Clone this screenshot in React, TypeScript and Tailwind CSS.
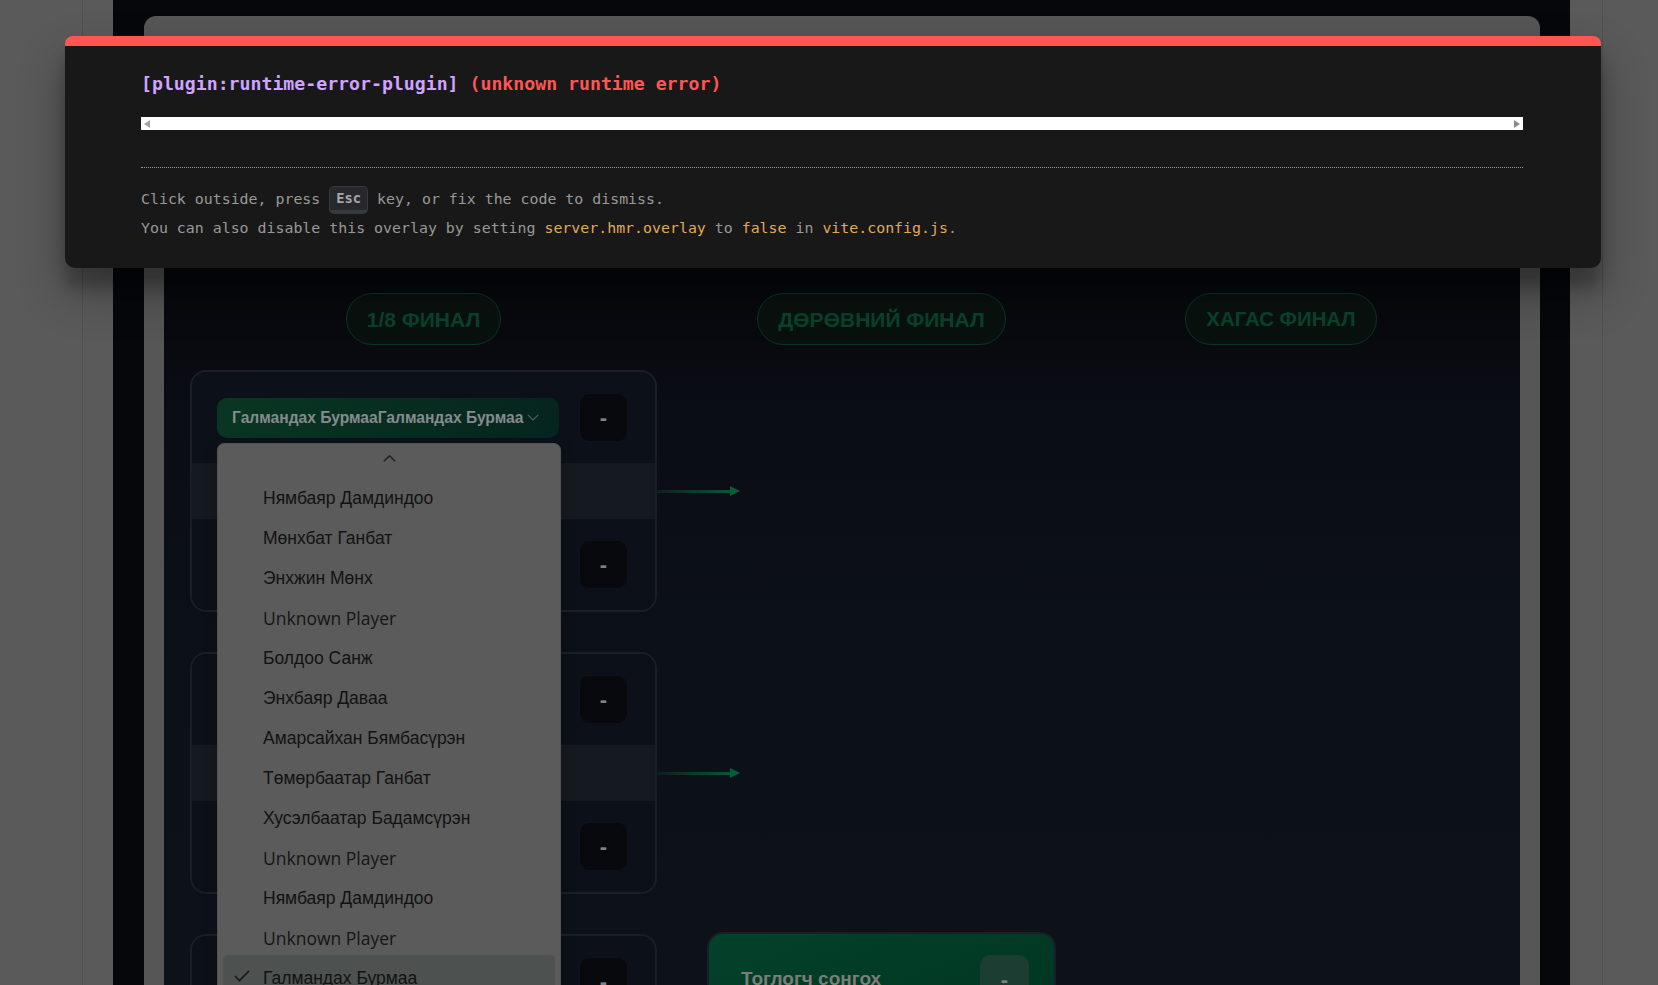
import React from "react";

type Item = { t: string; latin?: boolean; sel?: boolean };

const items: Item[] = [
  { t: "Нямбаяр Дамдиндоо" },
  { t: "Мөнхбат Ганбат" },
  { t: "Энхжин Мөнх" },
  { t: "Unknown Player", latin: true },
  { t: "Болдоо Санж" },
  { t: "Энхбаяр Даваа" },
  { t: "Амарсайхан Бямбасүрэн" },
  { t: "Төмөрбаатар Ганбат" },
  { t: "Хусэлбаатар Бадамсүрэн" },
  { t: "Unknown Player", latin: true },
  { t: "Нямбаяр Дамдиндоо" },
  { t: "Unknown Player", latin: true },
  { t: "Галмандах Бурмаа", sel: true },
];

function ScoreBox({ green }: { green?: boolean }) {
  return (
    <div
      className={
        green
          ? "flex h-[49px] w-[49px] shrink-0 items-center justify-center rounded-[10px] bg-[#1b3d32]"
          : "flex h-[49px] w-[49px] shrink-0 items-center justify-center rounded-[10px] border border-[#0f1319] bg-[#07090d]"
      }
    >
      <span className="text-[22px] font-bold leading-none text-[#7d818b]">-</span>
    </div>
  );
}

function PlayerButton({ label }: { label: string }) {
  return (
    <div className="flex h-[40px] w-[342px] shrink-0 items-center gap-[4px] overflow-hidden rounded-[10px] bg-gradient-to-r from-[#093622] to-[#05251e] pl-[15px]">
      {label && <span className="whitespace-nowrap text-[15.6px] font-bold text-[#858a8e]">{label}</span>}
      <svg width="12" height="7" viewBox="0 0 12 7" className="shrink-0">
        <polyline points="0.8,0.8 6,6 11.2,0.8" fill="none" stroke="#4f5d59" strokeWidth="1.2" />
      </svg>
    </div>
  );
}

function Arrow() {
  return (
    <div className="absolute left-[calc(100%+2px)] top-[114px] flex h-[10px] w-[83px] items-center">
      <div className="h-[3px] flex-1 bg-gradient-to-r from-[#0b211c] to-[#0b5436]" />
      <svg width="10" height="10" viewBox="0 0 10 10" className="shrink-0">
        <polygon points="0,0 10,5 0,10" fill="#0b5a3a" />
      </svg>
    </div>
  );
}

function MatchCard({ top, bottom }: { top: string; bottom: string }) {
  return (
    <div className="relative flex h-[242px] w-[467px] flex-col rounded-[16px] border-2 border-[#1a1e27] bg-[#0c1018]">
      <div className="flex h-[91px] items-center gap-[20px] pl-[25px] pr-[27px]">
        <PlayerButton label={top} />
        <ScoreBox />
      </div>
      <div className="h-[56px] bg-[#151920]" />
      <div className="flex h-[91px] items-center gap-[20px] pl-[25px] pr-[27px]">
        <PlayerButton label={bottom} />
        <ScoreBox />
      </div>
      <Arrow />
    </div>
  );
}

function Pill({ text, size }: { text: string; size: "a" | "b" }) {
  return (
    <div className="flex h-[52px] items-center rounded-full border border-[#0a3524] bg-[#09110f] px-[20px]">
      <span
        className={
          size === "a"
            ? "whitespace-nowrap text-[21px] font-bold leading-none text-[#09432b]"
            : "whitespace-nowrap text-[20.4px] font-bold leading-none text-[#09432b]"
        }
      >
        {text}
      </span>
    </div>
  );
}

export default function App() {
  return (
    <div className="relative h-[985px] w-[1658px] overflow-hidden bg-[#5a5a5a] font-['Liberation_Sans',Arial,sans-serif]">
      {/* page frame */}
      <div className="flex h-full">
        <div className="w-[82px] shrink-0" />
        <div className="flex h-full w-[1521px] shrink-0 border-x border-[#4b524f] pl-[30px] pr-[32px]">
          <div className="flex h-full w-[1457px] flex-col bg-[#05070b] pl-[31px] pr-[30px] pt-[16px]">
            <div className="flex flex-1 flex-col rounded-t-[12px] bg-[#565656] px-[20px] pt-[20px]">
              <div className="flex-1 bg-[linear-gradient(180deg,#040609_0%,#07090e_24%,#0a0d14_34%,#0c1018_55%,#0e121b_100%)] pl-[26px] pt-[257px]">
                <div className="flex items-start gap-[50px]">
                  {/* 1/8 */}
                  <div className="flex w-[467px] flex-col items-center">
                    <Pill text="1/8 ФИНАЛ" size="a" />
                    <div className="mt-[25px] flex flex-col gap-[40px]">
                      <MatchCard top="Галмандах БурмааГалмандах Бурмаа" bottom="" />
                      <MatchCard top="" bottom="" />
                      <MatchCard top="" bottom="" />
                    </div>
                  </div>
                  {/* quarter */}
                  <div className="flex w-[349px] flex-col items-center">
                    <Pill text="ДӨРӨВНИЙ ФИНАЛ" size="a" />
                    <div className="mt-[587px] w-full rounded-[16px] border-2 border-[#1a1e26] bg-gradient-to-br from-[#03412a] to-[#00321f]">
                      <div className="flex h-[91px] items-center justify-between pl-[32px] pr-[25px]">
                        <span className="whitespace-nowrap text-[19px] font-bold text-[#7a7e77]">Тоглогч сонгох</span>
                        <ScoreBox green />
                      </div>
                      <div className="h-[56px]" />
                    </div>
                  </div>
                  {/* semi */}
                  <div className="flex w-[350px] flex-col items-center">
                    <Pill text="ХАГАС ФИНАЛ" size="b" />
                  </div>
                </div>
              </div>
            </div>
          </div>
        </div>
      </div>

      {/* select dropdown */}
      <div className="absolute left-[217px] top-[443px] h-[600px] w-[344px] rounded-[7px] border border-[#535353] bg-[#5b5b5b] shadow-[0_6px_16px_rgba(0,0,0,0.15)]">
        <div className="flex h-[34px] justify-center pt-[11px]">
          <svg width="13" height="7" viewBox="0 0 13 7">
            <polyline points="0.8,6.2 6.5,0.8 12.2,6.2" fill="none" stroke="#1f1f1f" strokeWidth="1.5" />
          </svg>
        </div>
        <div className="flex flex-col px-[5px]">
          {items.map((it, i) => (
            <div
              key={i}
              className={
                it.sel
                  ? "relative -mt-[3px] flex h-[43px] items-center rounded-[5px] bg-[#4d5150] pl-[40px] pt-[3px]"
                  : "relative flex h-[40px] items-center pl-[40px]"
              }
            >
              {it.sel && (
                <svg width="16" height="12" viewBox="0 0 16 12" className="absolute left-[11px] top-[15px]">
                  <polyline points="1,6 5.5,10.5 15,1" fill="none" stroke="#161616" strokeWidth="1.6" />
                </svg>
              )}
              <span
                className={
                  it.latin
                    ? "whitespace-nowrap font-['Open_Sans',sans-serif] text-[17.5px] text-[#151515]"
                    : "whitespace-nowrap font-['Liberation_Sans',Arial,sans-serif] text-[17.5px] text-[#121212]"
                }
              >
                {it.t}
              </span>
            </div>
          ))}
        </div>
      </div>

      {/* vite error overlay window */}
      <div className="absolute left-[65px] top-[36px] h-[232px] w-[1536px] overflow-hidden rounded-t-[8px] rounded-b-[10px] border-t-[10px] border-[#ff5555] bg-[#181818] pl-[76px] pr-[78px] pt-[25px] font-['DejaVu_Sans_Mono',monospace] shadow-[0_24px_48px_rgba(0,0,0,0.3),0_19px_15px_rgba(0,0,0,0.22)]">
        <div className="h-[26px] whitespace-pre text-[18.2px] font-semibold leading-[26px]">
          <span className="text-[#cfa4ff]">[plugin:runtime-error-plugin]</span>
          <span className="text-[#ff5555]"> (unknown runtime error)</span>
        </div>
        <div className="relative mt-[20px] flex h-[13px] items-center justify-between bg-white px-[3px]">
          <svg width="6" height="8" viewBox="0 0 6 8">
            <polygon points="6,0 0,4 6,8" fill="#a3a3a3" />
          </svg>
          <svg width="6" height="8" viewBox="0 0 6 8">
            <polygon points="0,0 6,4 0,8" fill="#8c8c8c" />
          </svg>
        </div>
        <div className="mt-[37px] border-t border-dotted border-[#999]" />
        <div className="pt-[16.5px] text-[14.9px] leading-[29.25px] text-[#999]">
          <div className="whitespace-pre">
            Click outside, press{" "}
            <span className="inline-block h-[28px] rounded-[5px] border border-b-[4px] border-[#363940] bg-[#26282c] px-[6px] align-middle text-[13.75px] font-bold leading-[22px] text-[#a6a7ab]">
              Esc
            </span>{" "}
            key, or fix the code to dismiss.
          </div>
          <div className="whitespace-pre">
            You can also disable this overlay by setting{" "}
            <span className="text-[#e2aa53]">server.hmr.overlay</span> to{" "}
            <span className="text-[#e2aa53]">false</span> in{" "}
            <span className="text-[#e2aa53]">vite.config.js</span>.
          </div>
        </div>
      </div>
    </div>
  );
}
